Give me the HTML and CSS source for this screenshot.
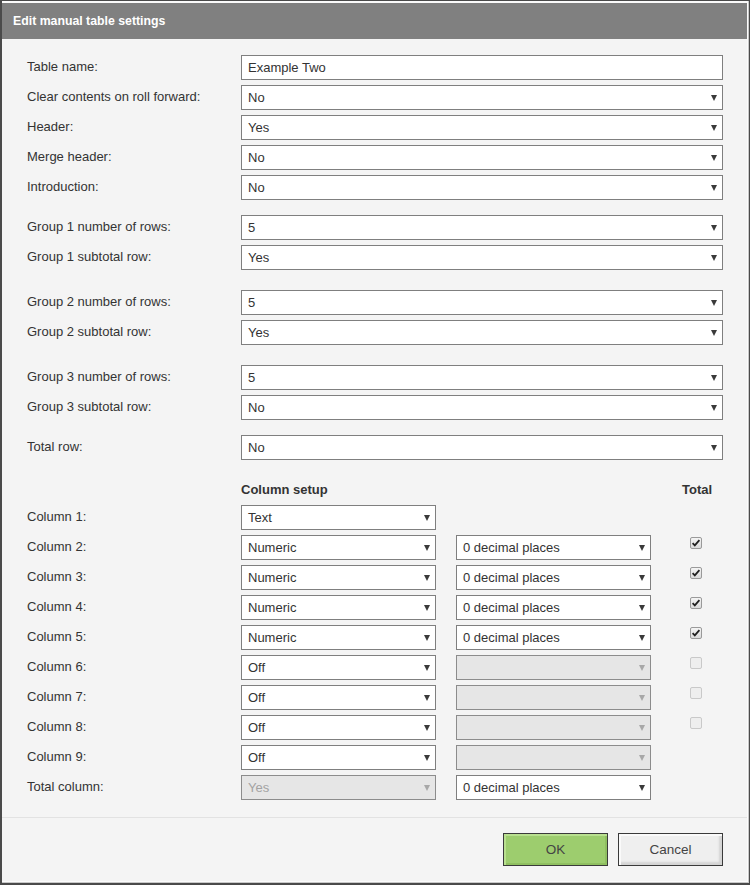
FILE: index.html
```html
<!DOCTYPE html>
<html lang="en">
<head>
<meta charset="utf-8">
<title>Edit manual table settings</title>
<link rel="stylesheet" href="styles.css">
</head>
<body>
<div class="dialog">
  <div class="panel">
    <div class="header">Edit manual table settings</div>
    <div class="form">
      <div class="group">
        <div class="row"><div class="label">Table name:</div><div class="input">Example Two</div></div>
        <div class="row"><div class="label">Clear contents on roll forward:</div><div class="select"><span>No</span><i class="caret"></i></div></div>
        <div class="row"><div class="label">Header:</div><div class="select"><span>Yes</span><i class="caret"></i></div></div>
        <div class="row"><div class="label">Merge header:</div><div class="select"><span>No</span><i class="caret"></i></div></div>
        <div class="row"><div class="label">Introduction:</div><div class="select"><span>No</span><i class="caret"></i></div></div>
      </div>
      <div class="group g15">
        <div class="row"><div class="label">Group 1 number of rows:</div><div class="select"><span>5</span><i class="caret"></i></div></div>
        <div class="row"><div class="label">Group 1 subtotal row:</div><div class="select"><span>Yes</span><i class="caret"></i></div></div>
      </div>
      <div class="group g20">
        <div class="row"><div class="label">Group 2 number of rows:</div><div class="select"><span>5</span><i class="caret"></i></div></div>
        <div class="row"><div class="label">Group 2 subtotal row:</div><div class="select"><span>Yes</span><i class="caret"></i></div></div>
      </div>
      <div class="group g20">
        <div class="row"><div class="label">Group 3 number of rows:</div><div class="select"><span>5</span><i class="caret"></i></div></div>
        <div class="row"><div class="label">Group 3 subtotal row:</div><div class="select"><span>No</span><i class="caret"></i></div></div>
      </div>
      <div class="group g15">
        <div class="row"><div class="label">Total row:</div><div class="select"><span>No</span><i class="caret"></i></div></div>
      </div>
      <div class="group g20">
        <div class="crow head"><div></div><div class="colhead">Column setup</div><div></div><div class="totalhead">Total</div></div>
        <div class="crow"><div class="label">Column 1:</div><div class="select"><span>Text</span><i class="caret"></i></div><div></div><div></div></div>
        <div class="crow"><div class="label">Column 2:</div><div class="select"><span>Numeric</span><i class="caret"></i></div><div class="select"><span>0 decimal places</span><i class="caret"></i></div><div class="cell"><span class="check on"><svg viewBox="0 0 12 12" width="12" height="12"><path d="M2.6 6.2 L4.8 8.4 L9.4 3.2" fill="none" stroke="#222" stroke-width="1.8"/></svg></span></div></div>
        <div class="crow"><div class="label">Column 3:</div><div class="select"><span>Numeric</span><i class="caret"></i></div><div class="select"><span>0 decimal places</span><i class="caret"></i></div><div class="cell"><span class="check on"><svg viewBox="0 0 12 12" width="12" height="12"><path d="M2.6 6.2 L4.8 8.4 L9.4 3.2" fill="none" stroke="#222" stroke-width="1.8"/></svg></span></div></div>
        <div class="crow"><div class="label">Column 4:</div><div class="select"><span>Numeric</span><i class="caret"></i></div><div class="select"><span>0 decimal places</span><i class="caret"></i></div><div class="cell"><span class="check on"><svg viewBox="0 0 12 12" width="12" height="12"><path d="M2.6 6.2 L4.8 8.4 L9.4 3.2" fill="none" stroke="#222" stroke-width="1.8"/></svg></span></div></div>
        <div class="crow"><div class="label">Column 5:</div><div class="select"><span>Numeric</span><i class="caret"></i></div><div class="select"><span>0 decimal places</span><i class="caret"></i></div><div class="cell"><span class="check on"><svg viewBox="0 0 12 12" width="12" height="12"><path d="M2.6 6.2 L4.8 8.4 L9.4 3.2" fill="none" stroke="#222" stroke-width="1.8"/></svg></span></div></div>
        <div class="crow"><div class="label">Column 6:</div><div class="select"><span>Off</span><i class="caret"></i></div><div class="select disabled"><span></span><i class="caret"></i></div><div class="cell"><span class="check off"></span></div></div>
        <div class="crow"><div class="label">Column 7:</div><div class="select"><span>Off</span><i class="caret"></i></div><div class="select disabled"><span></span><i class="caret"></i></div><div class="cell"><span class="check off"></span></div></div>
        <div class="crow"><div class="label">Column 8:</div><div class="select"><span>Off</span><i class="caret"></i></div><div class="select disabled"><span></span><i class="caret"></i></div><div class="cell"><span class="check off"></span></div></div>
        <div class="crow"><div class="label">Column 9:</div><div class="select"><span>Off</span><i class="caret"></i></div><div class="select disabled"><span></span><i class="caret"></i></div><div></div></div>
        <div class="crow"><div class="label">Total column:</div><div class="select disabled"><span>Yes</span><i class="caret"></i></div><div class="select"><span>0 decimal places</span><i class="caret"></i></div><div></div></div>
      </div>
    </div>
    <div class="footer">
      <button class="btn ok" type="button">OK</button>
      <button class="btn cancel" type="button">Cancel</button>
    </div>
  </div>
</div>
</body>
</html>
```
FILE: styles.css
```css
html, body {
  margin: 0;
  padding: 0;
  background: #ffffff;
}

body {
  font-family: "Liberation Sans", Arial, sans-serif;
  font-size: 13px;
  color: #333333;
}

.dialog {
  box-sizing: border-box;
  width: 750px;
  height: 885px;
  border: 1px solid #4a4a4a;
  border-left-width: 2px;
  border-bottom-width: 2px;
  padding: 2px 2px 2px 0;
  background: #fbfbfb;
  box-shadow: inset -1px -1px 0 #c8c8c8;
}

.panel {
  height: 100%;
  background: #f4f4f4;
  display: flex;
  flex-direction: column;
}

.header {
  height: 36px;
  line-height: 36px;
  background: #808080;
  color: #ffffff;
  font-weight: bold;
  font-size: 12.3px;
  padding-left: 11px;
}

.form {
  padding: 16px 24px 17px 25px;
  border-bottom: 1px solid #e2e2e2;
}

.group {
  display: flex;
  flex-direction: column;
  gap: 5px;
}

.g15 { margin-top: 15px; }
.g20 { margin-top: 20px; }

.row {
  display: grid;
  grid-template-columns: 214px 1fr;
}

.crow {
  display: grid;
  grid-template-columns: 194px 195px 195px 1fr;
  column-gap: 20px;
}

.crow.head {
  height: 20px;
  line-height: 20px;
}

.colhead, .totalhead {
  font-weight: bold;
  color: #333333;
}

.totalhead {
  padding-left: 11px;
}

.label {
  line-height: 23px;
  white-space: nowrap;
}

.input, .select {
  box-sizing: border-box;
  height: 25px;
  border: 1px solid #7f7f7f;
  background: #ffffff;
  color: #333333;
  line-height: 23px;
  padding-left: 6px;
}

.select {
  display: flex;
  align-items: center;
  justify-content: space-between;
  padding-right: 5px;
}

.caret {
  width: 0;
  height: 0;
  border-left: 3.5px solid transparent;
  border-right: 3.5px solid transparent;
  border-top: 6px solid #3a3a3a;
}

.select.disabled {
  background: #e6e6e6;
  border-color: #8c8c8c;
  color: #a3a3a3;
}

.select.disabled .caret {
  border-top-color: #a8a8a8;
}

.cell {
  padding-top: 2px;
  padding-left: 19px;
}

.check {
  box-sizing: border-box;
  display: block;
  width: 12px;
  height: 12px;
  border-radius: 2px;
}

.check svg {
  display: block;
  margin: -1px 0 0 -1px;
}

.check.on {
  border: 1px solid #9a9a9a;
  background: linear-gradient(#f4f4f4, #dcdcdc);
}

.check.off {
  border: 1px solid #c9c9c9;
  background: #eeeeee;
}

.footer {
  flex: 1;
  display: flex;
  justify-content: flex-end;
  align-items: flex-start;
  gap: 10px;
  padding: 15px 24px 0 0;
}

.btn {
  box-sizing: border-box;
  width: 105px;
  height: 33px;
  border: 1px solid #3a3a3a;
  font-family: "Liberation Sans", Arial, sans-serif;
  font-size: 13.5px;
  color: #444444;
  padding: 0;
  margin: 0;
}

.btn.ok {
  background: #9dcd6e;
  box-shadow: inset 2px 2px 0 #b9e08f, inset -2px -2px 0 #8fbf60;
}

.btn.cancel {
  background: #efefef;
  box-shadow: inset 2px 2px 0 #fafafa, inset -3px -3px 2px #d4d4d4;
}
```
